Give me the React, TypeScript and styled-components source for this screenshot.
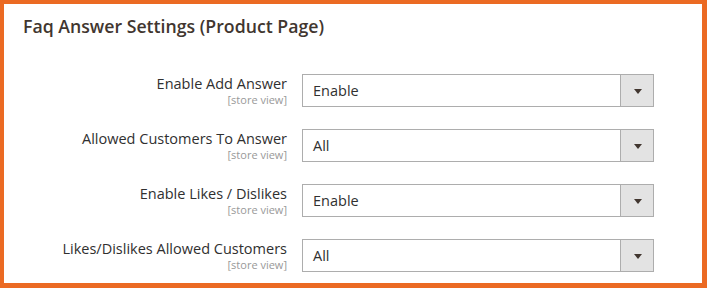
import React from "react";
import styled, { createGlobalStyle } from "styled-components";

const GlobalStyle = createGlobalStyle`
  html, body { margin: 0; padding: 0; background: #ffffff; }
  body { font-family: "Open Sans", "Liberation Sans", sans-serif; }
`;

const Panel = styled.section`
  box-sizing: border-box;
  width: 707px;
  height: 288px;
  border-style: solid;
  border-color: #eb6a23;
  border-width: 4px 5px 5px 4px;
  background: #ffffff;
  padding: 12px 0 10px 19px;
`;

const Title = styled.h2`
  margin: 0 0 38px 0;
  font-size: 17.7px;
  line-height: 20px;
  font-weight: 600;
  color: #41362f;
`;

const Rows = styled.div`
  display: grid;
  grid-template-columns: 264px 352px;
  column-gap: 15px;
  row-gap: 22px;
`;

const Label = styled.div`
  text-align: right;
  color: #303030;
  font-size: 14.5px;
  line-height: 16px;
  padding-top: 1.6px;
  font-weight: 400;
`;

const Scope = styled.span`
  display: block;
  font-size: 11px;
  line-height: 15px;
  color: #999999;
`;

const Select = styled.div`
  box-sizing: border-box;
  display: flex;
  height: 33px;
  border: 1px solid #adadad;
  background: #ffffff;
`;

const Value = styled.div`
  flex: 1;
  display: flex;
  align-items: center;
  padding-left: 10px;
  font-size: 14.5px;
  color: #303030;
`;

const Arrow = styled.div`
  width: 33px;
  border-left: 1px solid #adadad;
  background: #e3e3e3;
  display: flex;
  align-items: center;
  justify-content: center;
  padding-left: 1px;
  padding-top: 1px;
  box-sizing: border-box;
`;

const Triangle = styled.span`
  width: 0;
  height: 0;
  border-left: 4px solid transparent;
  border-right: 4px solid transparent;
  border-top: 5px solid #41362f;
`;

const fields = [
  { label: "Enable Add Answer", value: "Enable" },
  { label: "Allowed Customers To Answer", value: "All" },
  { label: "Enable Likes / Dislikes", value: "Enable" },
  { label: "Likes/Dislikes Allowed Customers", value: "All" },
];

export default function App() {
  return (
    <>
      <GlobalStyle />
      <Panel>
        <Title>Faq Answer Settings (Product Page)</Title>
        <Rows>
          {fields.map((f) => (
            <React.Fragment key={f.label}>
              <Label>
                {f.label}
                <Scope>[store view]</Scope>
              </Label>
              <Select>
                <Value>{f.value}</Value>
                <Arrow>
                  <Triangle />
                </Arrow>
              </Select>
            </React.Fragment>
          ))}
        </Rows>
      </Panel>
    </>
  );
}
